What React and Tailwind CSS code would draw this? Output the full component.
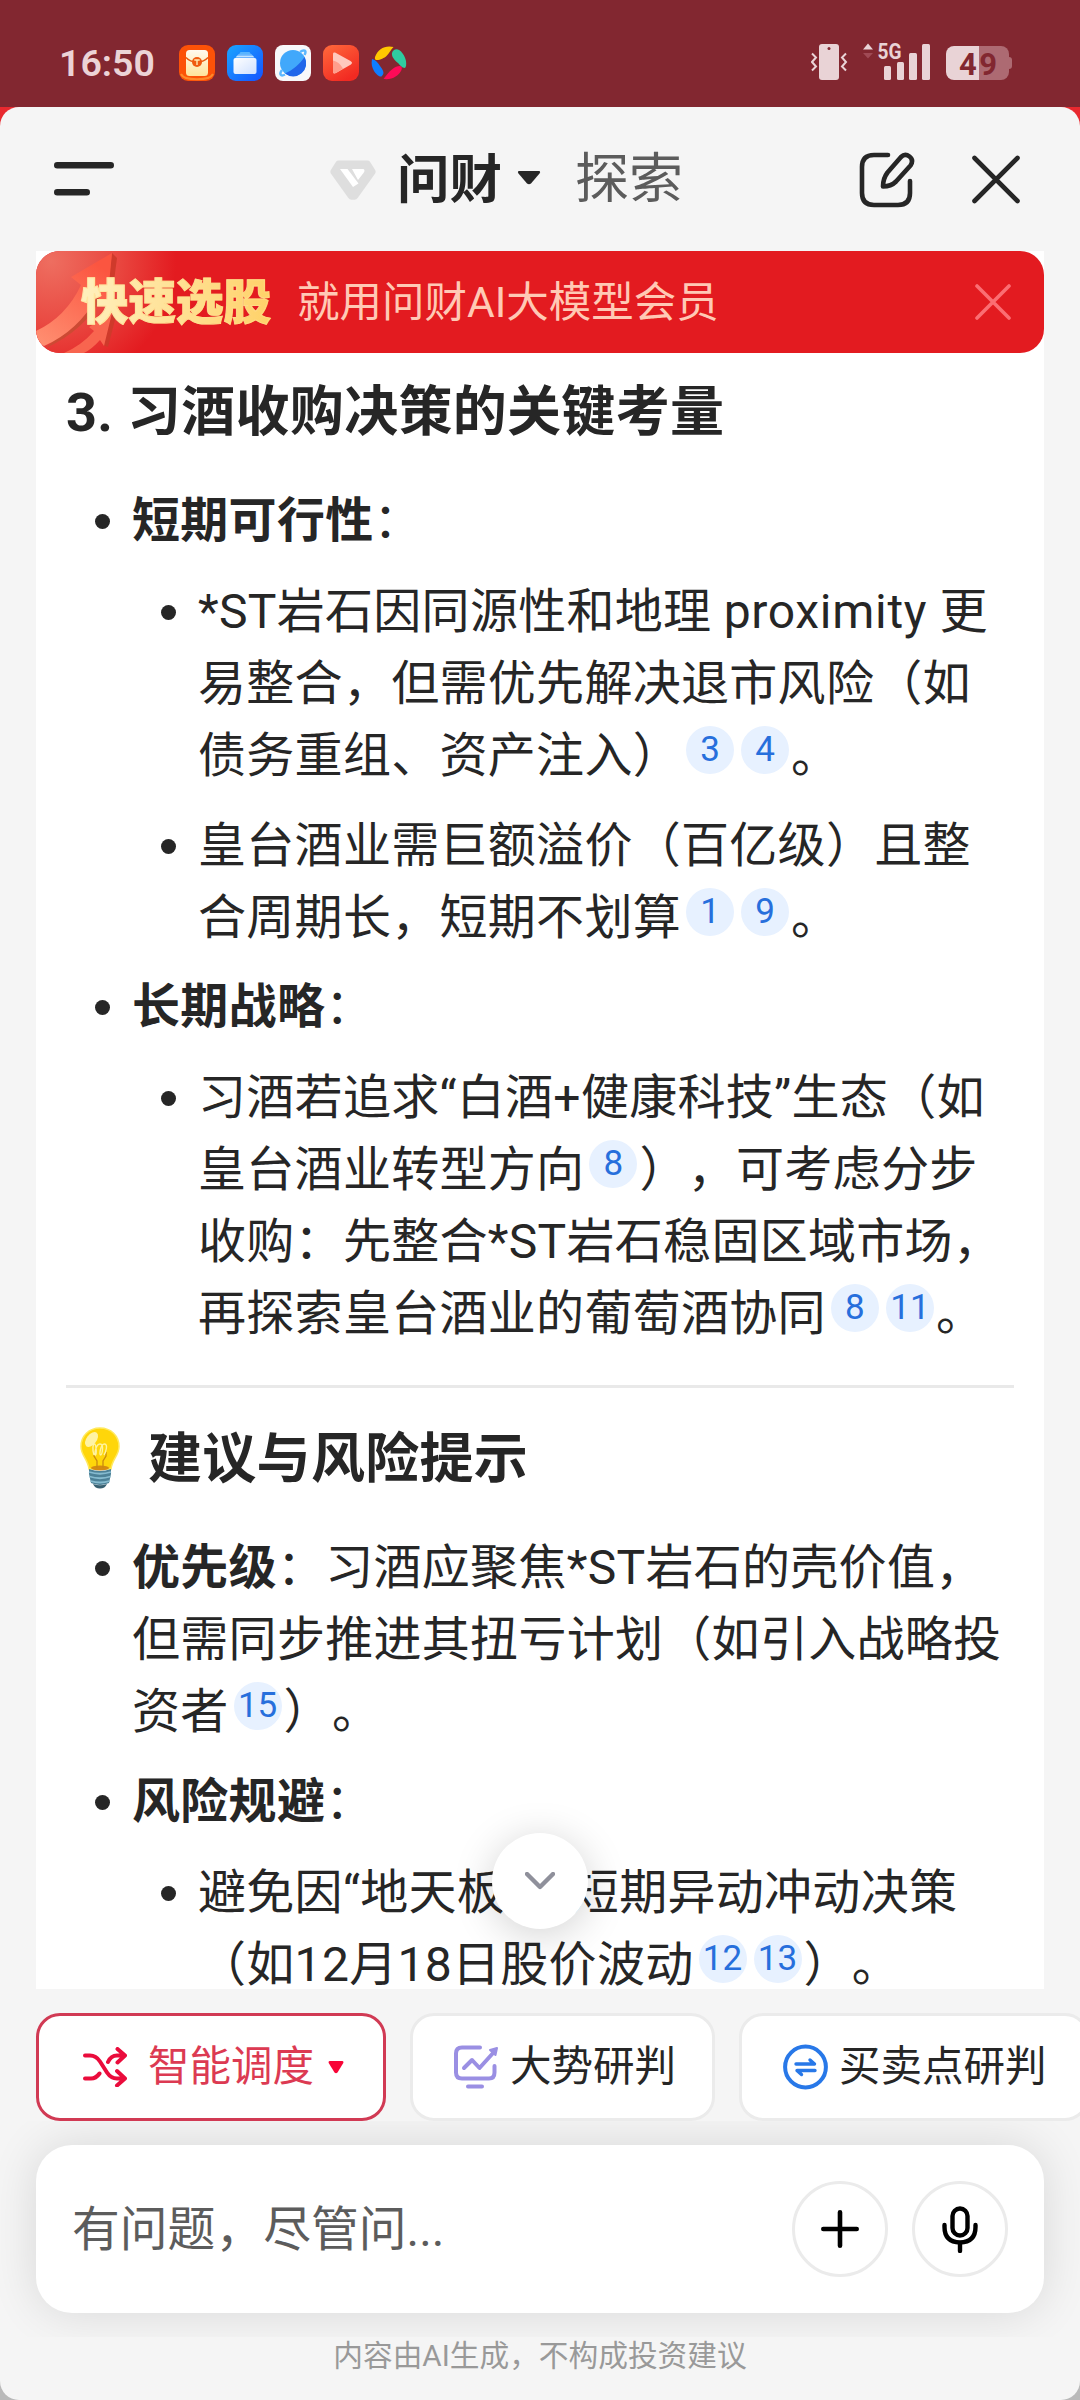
const BASE = "[text-spacing-trim:space-all] [font-family:Roboto,'Noto_Sans_CJK_SC',sans-serif]";

function Cite({ n }) {
  return (
    <span className="relative -top-[9px] ml-[5px] mr-[2px] inline-flex h-12 w-12 items-center justify-center rounded-full bg-[#e7f1ff] align-middle text-[35px] leading-none tracking-normal text-[#276fdc]">
      <span className="-translate-y-px">{n}</span>
    </span>
  );
}

function Line({ children }) {
  return <div className="h-[72px] whitespace-nowrap leading-[72px]">{children}</div>;
}

function Item({ children }) {
  return (
    <li className="flex">
      <span className="mr-[22px] mt-[30px] h-[15px] w-[15px] shrink-0 rounded-full bg-[#262626]" />
      <div>{children}</div>
    </li>
  );
}

function SubList({ children }) {
  return <ul className="mt-[18px] flex flex-col gap-[18px] pl-[29px]">{children}</ul>;
}

function StatusBar() {
  return (
    <div className="flex h-[107px] shrink-0 items-start bg-[#822730] pl-[59px] pr-[68px]">
      <div className="mt-[43px] w-[120px] text-[37.5px] font-semibold leading-[40px] text-[#ecd3d6]">16:50</div>
      <div className="mt-[45px] flex gap-3">
        <svg width="36" height="36" viewBox="0 0 36 36">
          <defs>
            <linearGradient id="env" x1="0" y1="0" x2="0" y2="1"><stop offset="0" stopColor="#fffaf0" /><stop offset="1" stopColor="#ffe49a" /></linearGradient>
          </defs>
          <rect width="36" height="36" rx="9" fill="#fc5208" />
          <path d="M2 29c3 7 29 7 32 0" stroke="#ff8a2a" strokeWidth="2" fill="none" />
          <rect x="7" y="5" width="22" height="26" rx="3.500" fill="url(#env)" />
          <path d="M7 12.500c3 3.500 6 4.500 11 4.500s8-1 11-4.500" stroke="#e8590f" strokeWidth="1.300" fill="none" />
          <circle cx="18" cy="17" r="5" fill="#f05a10" />
          <path d="M15.300 15h5.400M18 15v5" stroke="#ffe9b0" strokeWidth="1.400" />
        </svg>
        <svg width="36" height="36" viewBox="0 0 36 36">
          <defs>
            <linearGradient id="fold" x1="0" y1="0" x2="1" y2="1"><stop offset="0" stopColor="#1aa5ff" /><stop offset="1" stopColor="#1553ff" /></linearGradient>
            <linearGradient id="foldFront" x1="0" y1="0" x2="1" y2="1"><stop offset="0" stopColor="#ffffff" /><stop offset="1" stopColor="#cfe0ff" /></linearGradient>
          </defs>
          <rect width="36" height="36" rx="9" fill="url(#fold)" />
          <path d="M13.500 7h9l1.500 2.300H12z" fill="#58b4ff" />
          <path d="M11.500 9.300h13l1.500 1.500H10z" fill="#7cc3ff" />
          <path d="M10 10.800h16l1.500 1.700H8.500z" fill="#c3e3ff" />
          <rect x="6.500" y="13" width="23" height="16" rx="2" fill="url(#foldFront)" />
        </svg>
        <svg width="36" height="36" viewBox="0 0 36 36">
          <rect width="36" height="36" rx="8" fill="#f7f8fa" />
          <circle cx="18" cy="18" r="13" fill="#41a8fb" />
          <path d="M29.500 12A13 13 0 0 1 10 28.500C18 25 25 19 29.500 12z" fill="#2066ea" />
          <path d="M25 7c4-3 7-1.500 4.500 3M7 25c-3 4-1.500 7 3 4.500" stroke="#5bb8ff" strokeWidth="2.500" fill="none" />
        </svg>
        <svg width="36" height="36" viewBox="0 0 36 36">
          <defs>
            <linearGradient id="vid" x1="0" y1="0" x2="0.600" y2="1"><stop offset="0" stopColor="#ff6a3c" /><stop offset="1" stopColor="#f22a22" /></linearGradient>
          </defs>
          <rect width="36" height="36" rx="9" fill="url(#vid)" />
          <path d="M10 9.500c0-2 1-2.500 3-1.500l14.500 8c2 1.200 2 2.500 0 3.700L13 28c-2 1-3 .5-3-1.500z" fill="#ffc9be" />
          <path d="M10 15.500q6 1 10 8L13 28c-2 1-3 .5-3-1.500z" fill="#ff9e8c" />
        </svg>
        <svg width="36" height="36" viewBox="0 0 36 36">
          <path d="M4 12C7 4 14 0 22.500 2c-3 3-4 6-7 9-3 3-13 7-11.500 1z" fill="#ffc800" />
          <path d="M23 5c5-3 11 5 12 11 .5 4 0 6-1 7-3 0-5-3-7-5-4-3-9-9-4-13z" fill="#2fcb9f" />
          <path d="M30.500 25c-3 6-9 10-18 9 3-4 5-7 9-10s11-5 9 1z" fill="#ff0a57" />
          <path d="M1 14c4 1 6 4 8 7 3 4 5 7 2 10-2 2-6-2-8-5-2-4-3-7-2-12z" fill="#0f7dff" />
        </svg>
      </div>
      <div className="ml-auto mt-[30px] flex">
        <svg width="201" height="60" viewBox="811 30 201 60">
          <g fill="#e9d3d6">
            <rect x="819" y="44" width="20" height="36" rx="3" />
            <path d="M863 49.500l5-6 5 6z" />
            <rect x="884" y="66" width="7" height="14" rx="1.500" />
            <rect x="897" y="62" width="7" height="18" rx="1.500" />
            <rect x="909" y="53" width="8" height="27" rx="1.500" />
            <rect x="922" y="44" width="8" height="36" rx="1.500" />
          </g>
          <circle cx="829" cy="48.500" r="1.500" fill="#822730" />
          <path d="M812 53.500l4 4-4 4.500 4 4.500-4 4M846 53.500l-4 4 4 4.500-4 4.500 4 4" stroke="#e9d3d6" strokeWidth="2" fill="none" />
          <path d="M863 53l5 5.500 5-5.500z" fill="#a04a55" />
          <text x="877.500" y="59" fontSize="22" fontWeight="700" textLength="24" lengthAdjust="spacingAndGlyphs" fill="#e9d3d6">5G</text>
          <path d="M979 46h22a8 8 0 0 1 8 8v18a8 8 0 0 1-8 8h-22z" fill="#ad6a72" />
          <path d="M1009 57a3 3 0 0 1 3 3v6a3 3 0 0 1-3 3z" fill="#ad6a72" />
          <path d="M979 46h-25a8 8 0 0 0-8 8v18a8 8 0 0 0 8 8h25z" fill="#e9d3d6" />
          <text x="959" y="74.500" fontSize="31" fontWeight="700" textLength="38" fill="#822730">49</text>
        </svg>
      </div>
    </div>
  );
}

function Header() {
  return (
    <header className="flex h-[144px] shrink-0 items-center px-[54px]">
      <svg width="60" height="34" viewBox="0 0 60 34" className="shrink-0">
        <path d="M3.200 3.200h53.600M3.200 30.200h29.600" stroke="#262626" strokeWidth="6.400" strokeLinecap="round" />
      </svg>
      <svg width="46" height="40" viewBox="0 0 46 40" className="ml-[216px] mt-[2px] shrink-0">
        <path d="M8.500 0.500h29q1.500 0 2.500 1.300l5 8q1.300 2 0 4L28 37.500q-1.500 2.200-3.500 2.200h-3q-2 0-3.500-2.200L1 13.800q-1.300-2 0-4L6 1.800Q7 .5 8.500.5z" fill="#dedede" />
        <path d="M10 9h7.500l11 14.500L23 27z" fill="#fff" />
        <path d="M22 9h11.500q2 1.500 0 4L28 20z" fill="#fff" />
      </svg>
      <span className="ml-[21px] w-[112px] translate-y-px whitespace-nowrap text-[52.500px] font-bold leading-[72px] text-[#262626]">问财</span>
      <svg width="24" height="14" viewBox="0 0 24 14" className="ml-[8px] mt-[-2px] shrink-0">
        <path d="M2 0h20q2 .5 .5 2.500L14 12.500q-2 1.500-4 0L1.500 2.500Q0 .5 2 0z" fill="#262626" />
      </svg>
      <span className="ml-[34px] translate-y-px whitespace-nowrap text-[54px] leading-[72px] text-[#5c5c5c]">探索</span>
      <svg width="56" height="56" viewBox="0 0 56 56" className="ml-auto mt-[1px] shrink-0" fill="none" stroke="#262626" strokeWidth="4.600" strokeLinecap="round" strokeLinejoin="round">
        <path d="M29 3H15Q3 3 3 15v26q0 12 12 12h24q12 0 12-12V29" />
        <path d="M42 5Q46 1 50.500 4.500t1 9L37 29.500Q32 34.500 24 34.500q0-8 4.500-14z" />
      </svg>
      <svg width="48" height="49" viewBox="0 0 48 49" className="ml-[57px] mr-[6px] shrink-0">
        <path d="M2.500 3l43 43M45.500 3l-43 43" stroke="#262626" strokeWidth="4.600" strokeLinecap="round" />
      </svg>
    </header>
  );
}

function Banner() {
  return (
    <div className="relative flex h-[102px] shrink-0 items-center overflow-hidden rounded-[24px] bg-[#e31b20] pl-[45px] pr-[33px]">
      <svg width="200" height="102" viewBox="0 0 200 102" className="absolute left-0 top-0">
        <defs>
          <radialGradient id="glow" gradientUnits="userSpaceOnUse" cx="15" cy="10" r="125"><stop offset="0" stopColor="#ee6e60" /><stop offset="0.550" stopColor="#e9463f" /><stop offset="1" stopColor="#e31b20" /></radialGradient>
          <linearGradient id="arrow" x1="0" y1="1" x2="0.600" y2="0"><stop offset="0" stopColor="#ff9173" /><stop offset="1" stopColor="#fb5540" /></linearGradient>
        </defs>
        <rect width="200" height="102" fill="url(#glow)" />
        <path d="M76 2l5 5-6 46-5-2z" fill="#cf3a2b" />
        <path d="M76 62l4 3-8 31-5-2z" fill="#cf3a2b" />
        <path d="M10 97Q50 78 64 48l-3-2z" fill="#cc4a33" />
        <path d="M0 80Q30 66 45 34L35 26 76 2 71 54 61 46Q42 80 8 95L0 90z" fill="url(#arrow)" />
        <path d="M28 102Q46 94 58 80L53 76 76 62 68 95 64 89Q56 98 48 102z" fill="#f8654f" />
      </svg>
      <span className="relative w-[210px] translate-y-px whitespace-nowrap bg-gradient-to-r from-[#fff0bd] to-[#ffce5c] bg-clip-text text-[47.500px] font-black leading-[70px] text-transparent [-webkit-text-stroke:1px_#ffe09099]">快速选股</span>
      <span className="relative ml-[6px] translate-y-px whitespace-nowrap text-[42.500px] leading-[70px] text-[#ffc9b5]">就用问财AI大模型会员</span>
      <svg width="36" height="36" viewBox="0 0 36 36" className="relative ml-auto">
        <path d="M2 2l32 32M34 2L2 34" stroke="#fb6e73" strokeWidth="3.600" strokeLinecap="round" />
      </svg>
    </div>
  );
}

function Bulb() {
  return (
    <svg width="40" height="62" viewBox="0 0 40 62" className="-mt-1 ml-[14px] mr-[28px] shrink-0">
      <path d="M20 1C9 1 1 9 1 19.500c0 9 7 13 8 22.500h22c1-9.500 8-13.500 8-22.500C39 9 31 1 20 1z" fill="#ffd60a" stroke="#ffe95e" strokeWidth="1.500" />
      <ellipse cx="20" cy="41" rx="9" ry="2.500" fill="#d58a10" />
      <path d="M17 41V34l-3-5V25M23 41V34l3-5V25" stroke="#c98a12" strokeWidth="1.300" fill="none" />
      <path d="M14 28c-2-6-1-11 0.500-11s2.500 10 1 11 0-11 4.500-11 2 11 .5 11 0-11 4-11 1 9-.5 11" stroke="#fff3a0" strokeWidth="1.400" fill="none" />
      <ellipse cx="11.500" cy="12.500" rx="5" ry="8.500" transform="rotate(38 11.500 12.500)" fill="#fff8bf" opacity="0.850" />
      <path d="M9 42q11 4 22 0v5l-2 9q-9 4-18 0l-2-9z" fill="#4c8197" />
      <path d="M9 45q11 3.500 22 0M9.500 49.500q10.500 3.500 21 0M10.500 54q9.500 3 19 0" stroke="#86bbcf" strokeWidth="1.800" fill="none" />
      <path d="M13 57q7 2.500 14 0-2 4.500-7 4.500t-7-4.500z" fill="#375f70" />
    </svg>
  );
}

function Article() {
  return (
    <div className="px-[30px] pt-[20px] text-[48px] tracking-[0.3px] text-[#262626]">
      <h3 className="h-20 whitespace-nowrap text-[54px] font-bold leading-[80px]">3. 习酒收购决策的关键考量</h3>
      <ul className="mt-[31px] flex flex-col gap-[18px] pl-[29px] [&_li>div]:relative [&_li>div]:-mb-[1px] [&_li>div]:pt-[1px]">
        <Item>
          <Line><b>短期可行性</b>：</Line>
          <SubList>
            <Item>
              <Line>*ST岩石因同源性和地理 <span className="tracking-[0.7px]">proximity</span> 更</Line>
              <Line>易整合，但需优先解决退市风险（如</Line>
              <Line>债务重组、资产注入）<Cite n="3" /><Cite n="4" />。</Line>
            </Item>
            <Item>
              <Line>皇台酒业需巨额溢价（百亿级）且整</Line>
              <Line>合周期长，短期不划算<Cite n="1" /><Cite n="9" />。</Line>
            </Item>
          </SubList>
        </Item>
        <Item>
          <Line><b>长期战略</b>：</Line>
          <SubList>
            <Item>
              <Line>习酒若追求“白酒+健康科技”生态（如</Line>
              <Line>皇台酒业转型方向<Cite n="8" />），可考虑分步</Line>
              <Line>收购：先整合*ST岩石稳固区域市场，</Line>
              <Line>再探索皇台酒业的葡萄酒协同<Cite n="8" /><Cite n="11" />。</Line>
            </Item>
          </SubList>
        </Item>
      </ul>
      <hr className="mt-[37px] h-[3px] border-0 bg-[#e9e9e9]" />
      <h3 className="mt-[32px] flex h-20 items-center whitespace-nowrap text-[54px] font-bold leading-[80px]">
        <Bulb />
        建议与风险提示
      </h3>
      <ul className="mt-[31px] flex flex-col gap-[18px] pl-[29px] [&_li>div]:relative [&_li>div]:-mb-[1px] [&_li>div]:pt-[1px]">
        <Item>
          <Line><b>优先级</b>：习酒应聚焦*ST岩石的壳价值，</Line>
          <Line>但需同步推进其扭亏计划（如引入战略投</Line>
          <Line>资者<Cite n="15" />）。</Line>
        </Item>
        <Item>
          <Line><b>风险规避</b>：</Line>
          <SubList>
            <Item>
              <Line>避免因“地天板”等短期异动冲动决策</Line>
              <Line>（如12月18日股价波动<Cite n="12" /><Cite n="13" />）。</Line>
            </Item>
          </SubList>
        </Item>
      </ul>
    </div>
  );
}

function Chips() {
  const chip = "flex h-[108px] shrink-0 items-center whitespace-nowrap rounded-[24px] border-[3px] border-[#ebebeb] bg-white text-[41.500px] leading-[60px] text-[#262626]";
  return (
    <div className="mt-6 flex h-[108px] shrink-0 gap-6 overflow-hidden pl-9">
      <div className="flex h-[108px] w-[350px] shrink-0 items-center whitespace-nowrap rounded-[24px] border-[3px] border-[#d13a54] bg-white pl-[44px] text-[41.500px] leading-[60px] text-[#dc3a52]">
        <svg width="44" height="40" viewBox="0 0 44 40" fill="none" stroke="#ea0c3c" strokeWidth="4" strokeLinecap="round" strokeLinejoin="round">
          <path d="M2 8.500h5q6 0 10 6l7 11q4 6 10 6h7M34 24l8 7.500-8 7" />
          <path d="M2 31.500h6q5 0 8.500-5M25 15q3-6.500 9-6.500h7M34.500 2L42 8.500l-7.500 7" />
        </svg>
        <span className="ml-[21px]">智能调度</span>
        <svg width="16" height="13" viewBox="0 0 16 13" className="ml-[14px]"><path d="M1.500 0h13q1.500 .5 .8 2L9.500 11.500q-1.500 1.500-3 0L.7 2Q0 .5 1.500 0z" fill="#f80537" /></svg>
      </div>
      <div className={chip + " w-[305px] pl-[41px]"}>
        <svg width="45" height="44" viewBox="0 0 45 44" fill="none" stroke="#9a8fe3" strokeWidth="4" strokeLinecap="round" strokeLinejoin="round">
          <path d="M26 2.500H8Q2 2.500 2 8.500v19q0 6 6 6h27q5.500 0 5.500-6V21M14 41.500h14" />
          <path d="M10 23l8-8 7.500 8L40 7" />
          <path d="M36 5l7-2-1.500 7z" fill="#9a8fe3" strokeWidth="2" />
        </svg>
        <span className="ml-[11px]">大势研判</span>
      </div>
      <div className={chip + " w-[350px] pl-[41px]"}>
        <svg width="45" height="46" viewBox="0 0 45 46" fill="none" stroke="#2878e8" strokeWidth="4" strokeLinecap="round" strokeLinejoin="round">
          <circle cx="22.500" cy="23" r="20.400" />
          <path d="M13 20h18.500l-4.500-4M32 26.500H14l4.500 4" strokeWidth="3.400" />
        </svg>
        <span className="ml-[11px]">买卖点研判</span>
      </div>
    </div>
  );
}

function Composer() {
  const button = "flex h-24 w-24 items-center justify-center rounded-full border-[3px] border-[#ebebeb]";
  return (
    <div className="h-[216px] shrink-0 overflow-hidden px-9 py-6">
      <div className="flex h-[168px] items-center gap-6 rounded-[36px] bg-white pl-9 pr-9 shadow-[0_0_48px_rgba(0,0,0,0.12)]">
        <span className="flex-1 translate-y-px whitespace-nowrap text-[47.800px] leading-[72px] text-[#5c5c5c]">有问题，尽管问...</span>
        <div className={button}>
          <svg width="38" height="38" viewBox="0 0 38 38"><path d="M19 2.300v33.400M2.300 19h33.400" stroke="#000" strokeWidth="4.600" strokeLinecap="round" /></svg>
        </div>
        <div className={button}>
          <svg width="36" height="47" viewBox="0 0 36 47" fill="none" stroke="#000" strokeWidth="4.400" strokeLinecap="round">
            <rect x="10.500" y="2.500" width="15" height="27" rx="7.500" />
            <path d="M2.500 19v2q0 15 15.500 15.500Q33.500 36 33.500 21v-2M18 37v8" />
          </svg>
        </div>
      </div>
    </div>
  );
}

export default function App() {
  return (
    <div className={BASE + " flex h-[2400px] w-[1080px] flex-col overflow-hidden bg-[#822730]"}>
      <StatusBar />
      <div className="min-h-0 flex-1 bg-gradient-to-b from-[#e8292f] from-50% to-[#b9b9b9] to-50%">
        <div className="flex h-full flex-col overflow-hidden rounded-[19px] bg-[#f5f5f5]">
          <Header />
          <main className="relative mx-9 h-[1738px] shrink-0">
            <div className="h-full overflow-hidden bg-white">
              <Banner />
              <Article />
            </div>
            <div className="absolute left-[456px] top-[1582px] flex h-24 w-24 items-center justify-center rounded-full bg-white shadow-[0_6px_40px_rgba(0,0,0,0.18)]">
              <svg width="30" height="18" viewBox="0 0 30 18"><path d="M2 2l13 13L28 2" stroke="#8f909b" strokeWidth="4.400" fill="none" strokeLinecap="round" strokeLinejoin="round" /></svg>
            </div>
          </main>
          <Chips />
          <Composer />
          <footer className="h-9 translate-y-px whitespace-nowrap text-center text-[29.700px] leading-9 text-[#999]">内容由AI生成，不构成投资建议</footer>
        </div>
      </div>
    </div>
  );
}
